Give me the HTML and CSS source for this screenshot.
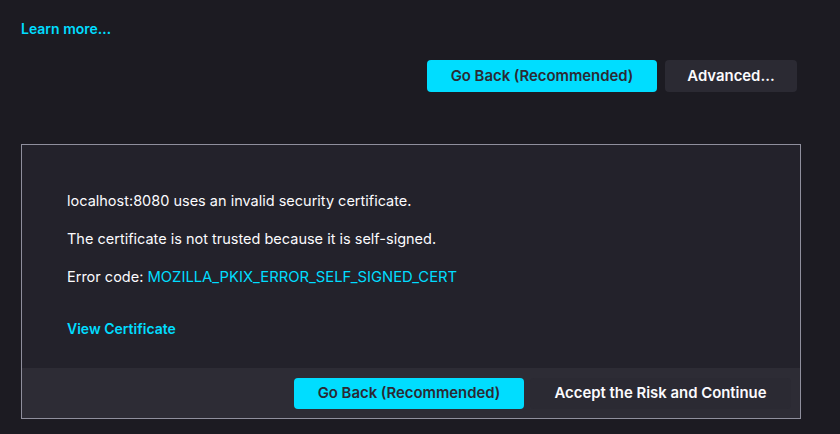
FILE: index.html
```html
<!DOCTYPE html>
<html>
<head>
<meta charset="utf-8">
<link rel="stylesheet" href="styles.css">
</head>
<body>
<div class="page">
  <a class="link learn" href="#">Learn more…</a>
  <div class="actions">
    <button class="btn primary">Go Back (Recommended)</button>
    <button class="btn secondary">Advanced…</button>
  </div>
  <div class="advanced">
    <div class="adv-body">
      <p class="line">localhost:8080 uses an invalid security certificate.</p>
      <p class="line">The certificate is not trusted because it is self-signed.</p>
      <p class="line">Error code: <a class="link code" href="#">MOZILLA_PKIX_ERROR_SELF_SIGNED_CERT</a></p>
      <p class="line view"><a class="link strong" href="#">View Certificate</a></p>
    </div>
    <div class="adv-footer">
      <button class="btn primary">Go Back (Recommended)</button>
      <button class="btn accept">Accept the Risk and Continue</button>
    </div>
  </div>
</div>
</body>
</html>
```
FILE: styles.css
```css
html, body {
  margin: 0;
  padding: 0;
  background: #1c1b22;
  color: #fbfbfe;
  font-family: Inter, "Noto Sans", sans-serif;
  font-size: 15px;
}
.page {
  padding: 20px 39px 0 21px;
}
.link {
  color: #00ddff;
  text-decoration: none;
}
.learn {
  display: block;
  font-weight: 600;
  line-height: 17px;
  font-size: 14px;
}
.actions {
  display: flex;
  justify-content: flex-end;
  gap: 8px;
  margin-top: 23px;
  padding-right: 4px;
}
.btn {
  font-family: inherit;
  font-size: 14.9px;
  font-weight: 600;
  height: 32px;
  border: none;
  border-radius: 4px;
  padding: 0 12px;
  margin: 0;
}
.primary {
  background: #00ddff;
  color: #2b2a33;
  width: 230px;
}
.secondary {
  background: #2b2a33;
  color: #fbfbfe;
  width: 132px;
}
.advanced {
  margin-top: 52px;
  width: 778px;
  border: 1px solid #8f8f9d;
  background: #23222b;
}
.adv-body {
  padding: 44px 45px 28px;
}
.line {
  margin: 0 0 15px;
  height: 23px;
  line-height: 23px;
  font-size: 14.5px;
}
.code {
  font-weight: 400;
  font-size: 14.8px;
}
.view {
  margin-top: 29px;
  margin-bottom: 0;
}
.strong {
  font-weight: 600;
  font-size: 14px;
}
.adv-footer {
  display: flex;
  justify-content: flex-end;
  align-items: center;
  gap: 6px;
  height: 50px;
  padding-right: 9px;
  background: #2d2c35;
}
.adv-footer .btn {
  height: 31px;
}
.accept {
  background: #2b2a33;
  color: #fbfbfe;
  width: 261px;
}
```
